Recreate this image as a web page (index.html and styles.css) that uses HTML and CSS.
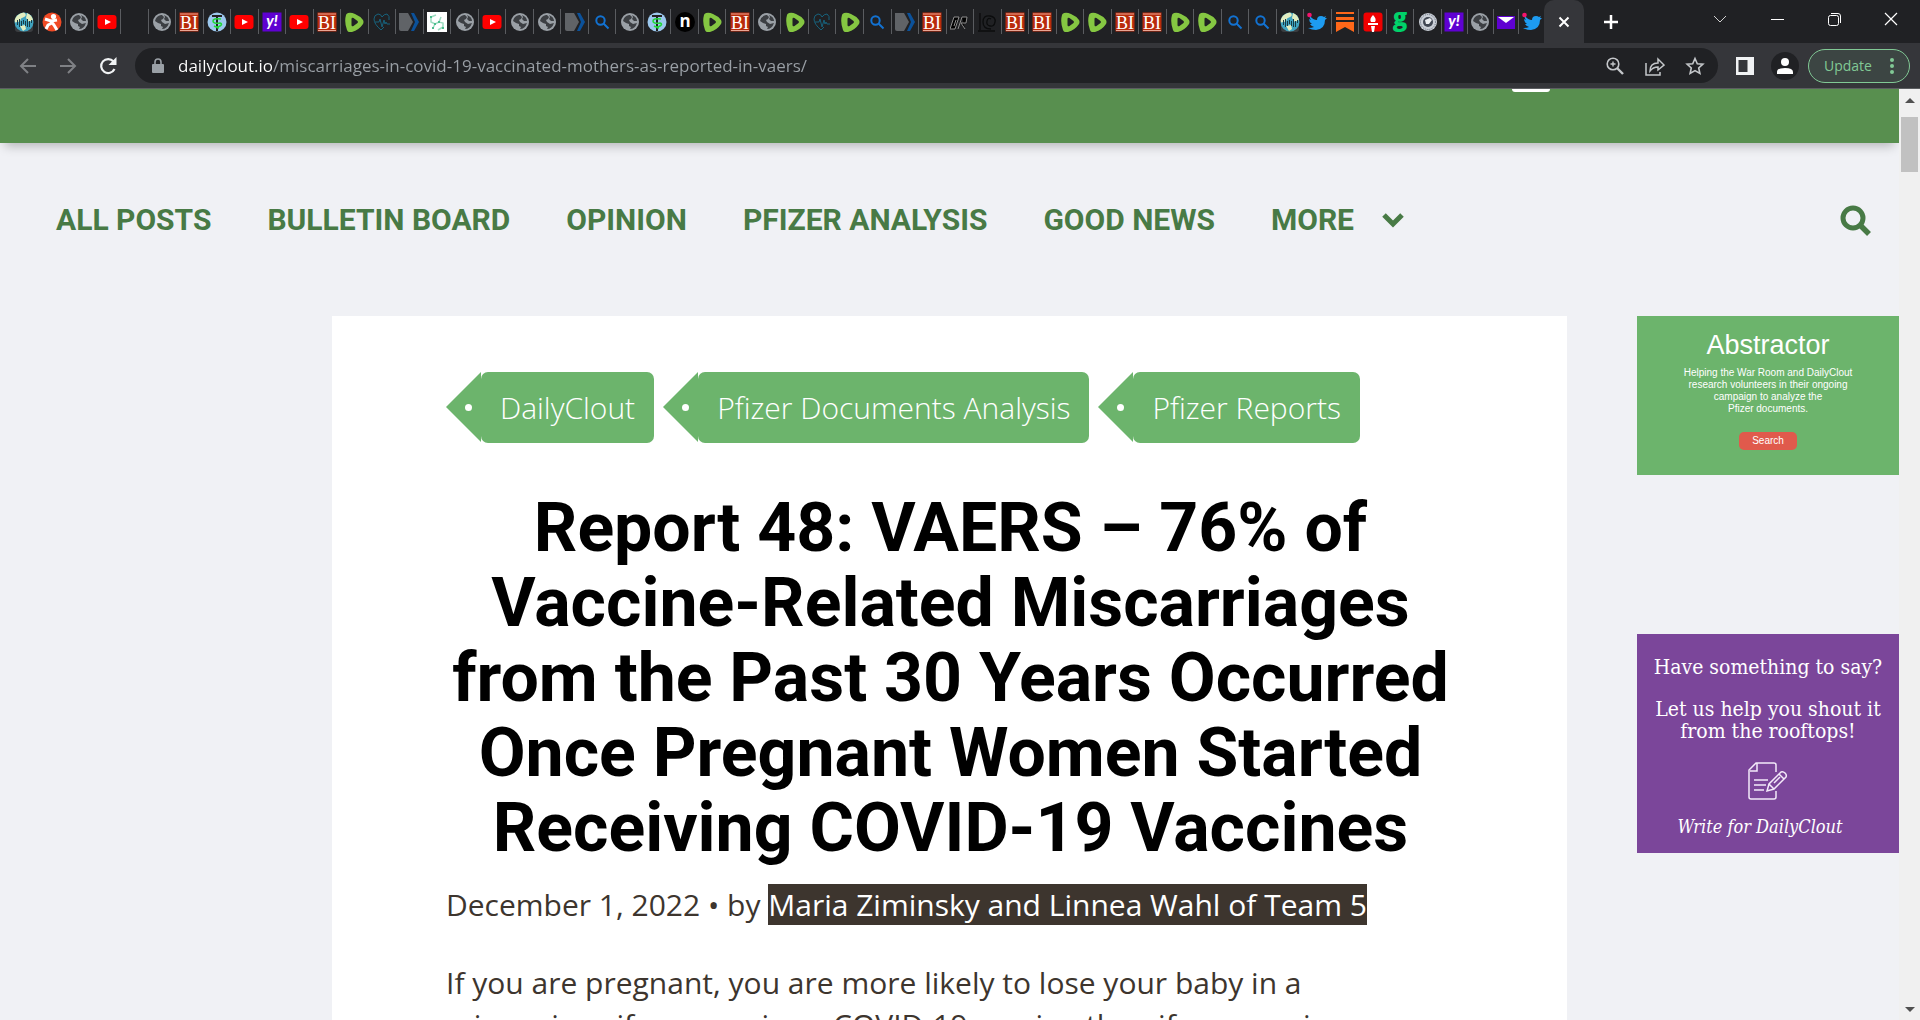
FILE: index.html
```html
<!DOCTYPE html>
<html lang="en">
<head>
    <meta charset="UTF-8">
    <meta name="viewport" content="width=device-width, initial-scale=1.0">
    <title>Report 48: VAERS – DailyClout</title>
    <link rel="stylesheet" href="styles.css">
</head>
<body>

<!-- Favicon shapes shared by the tabs -->
<svg class="sprites" aria-hidden="true">
    <symbol id="earth" viewBox="0 0 20 20"><path d="M1 11h18v6q0 3-3 3H4q-3 0-3-3z" fill="#3a3d40"/><circle cx="10" cy="10" r="9.500" fill="#3fa3c0"/><path d="M2 5q3-4 8-4.500 3 2 1 4l-4 2-1 3-5 1q-1-3 1-5.500zM13 1q5 2 6 7l-4 2-3-4zM6 14l5-1 1 4-3 2z" fill="#e3eec0"/><path d="M3.500 8v5M5.500 7v8M7.500 9v5M9.500 8v4M11.500 9v5M13.500 7v8M15.500 9v6M17.500 8v3" stroke="#173c46" stroke-width="1"/></symbol>
    <symbol id="runner" viewBox="0 0 20 20"><circle cx="10" cy="10" r="9.500" fill="#f04a24"/><circle cx="11.500" cy="4.500" r="2.600" fill="#fff"/><path d="M3 7l6 2 6-1M9 9l3 4 3 5M10 11l-4 2-2 4" stroke="#fff" stroke-width="3" fill="none"/></symbol>
    <symbol id="globe" viewBox="0 0 20 20"><circle cx="10" cy="10" r="9" fill="#9aa0a6"/><path d="M9 3q-5 1-6 6l3 2 3 1v2l2 1 2-3-3-2-1-2 2-1 1-2-2-2zM12 3l1 2-1 2 2 2h3q0-4-5-6zM17 11l-4 1-2 3-1 2q5 0 7-6z" fill="#3c3f43"/></symbol>
    <symbol id="yt" viewBox="0 0 20 20"><rect x="0.500" y="3" width="19" height="14" rx="3" fill="#f00"/><path d="M8 7l6 3-6 3z" fill="#fff"/></symbol>
    <symbol id="bi" viewBox="0 0 20 20"><rect x="0.500" y="0.500" width="19" height="19" fill="#b92b0a"/><path d="M1 2h18M1 18.500h18" stroke="#e9a594"/><text x="10" y="16.500" font-family="Liberation Serif, serif" font-size="18" text-anchor="middle" fill="#fff">BI</text></symbol>
    <symbol id="med" viewBox="0 0 20 20"><circle cx="10" cy="10" r="9.500" fill="#9cc8ee"/><path d="M5 4h10M10 4v15" stroke="#222" stroke-width="2"/><path d="M14 7q-8-1-8 2t7 2q3 1 0 3t-6 0M12 16q-3 0-3-2" stroke="#22d83a" stroke-width="1.600" fill="none"/></symbol>
    <symbol id="yahoo" viewBox="0 0 20 20"><rect x="0.500" y="0.500" width="19" height="19" fill="#5f01d1"/><text x="10" y="14" font-family="Lato, sans-serif" font-size="15" font-weight="900" font-style="italic" text-anchor="middle" fill="#fff">y!</text></symbol>
    <symbol id="rumble" viewBox="0 0 20 20"><path d="M4 1q3-1 7 1 5 2 8 6 1 2 0 4-4 6-11 8-4 1-5-2-3-8-1-15 0-1 2-2z" fill="#85c742"/><path d="M7.500 7q0-2 2-1l4 3q1 1 0 2l-4 3q-2 1-2-1z" fill="#202124"/></symbol>
    <symbol id="heart" viewBox="0 0 20 20"><path d="M9 18Q2 12 2 7q0-4 4-5 3 0 4 3 2-3 5-3 3 2 2 6M12 15l-3 3M3 10h4l1-3 2 8 2-7 1 4 1-2 1 2h3" fill="none" stroke="#17627c" stroke-width="1"/></symbol>
    <symbol id="arrows" viewBox="0 0 20 20"><path d="M0 1h9l5 9-5 9H2q-2 0-2-2z" fill="#606367"/><path d="M12 1h3l5 9-5 9h-3l4-9z" fill="#0b519a"/></symbol>
    <symbol id="molecule" viewBox="0 0 20 20"><path d="M0 0h20v20H0z" fill="#fff"/><path d="M9 3L4 5v5l4 2 4-2 4 1v4l-5 3M8 12l-2 4M12 10l2-5" fill="none" stroke="#9bdcc0" stroke-width="1.500"/><path d="M3 4h2v2H3zM7 11h2v2H7zM11 9h2v2h-2zM15 15h2v2h-2zM5 15h2v2H5z" fill="#4dbd8e"/></symbol>
    <symbol id="lens" viewBox="0 0 20 20"><circle cx="8.500" cy="8.500" r="4.200" fill="none" stroke="#1272d2" stroke-width="2"/><path d="M11.500 11.500l5 5" stroke="#1272d2" stroke-width="2"/></symbol>
    <symbol id="news" viewBox="0 0 20 20"><circle cx="10" cy="10" r="10" fill="#000"/><text x="10" y="15" font-family="Open Sans, sans-serif" font-size="17" font-weight="700" text-anchor="middle" fill="#fff">n</text></symbol>
    <symbol id="dr" viewBox="0 0 20 20"><path d="M4 5L0 17h5l4-12zM12 5L8 17M12 5h5l-1 6h-5l4 6M6 8L4 14" fill="#000" stroke="#8d8d8d" stroke-width="1"/></symbol>
    <symbol id="spiral" viewBox="0 0 20 20"><path d="M3 1v17M1 19h17M14 17q-8 0-8-7t7-6q6 1 5 6t-5 4-3-5 4-2" fill="none" stroke="#0b0c0d" stroke-width="1.300"/></symbol>
    <symbol id="bird" viewBox="0 0 20 20"><path d="M1 16q4 0 6-1-3-1-4-3h2Q2 10 2 7l2 1Q2 6 3 4q3 4 7 4 0-4 4-4 2 0 3 1l2-1-1 2h2l-2 2q0 9-9 10-4 0-8-2z" fill="#1d9bf0"/><circle cx="2.500" cy="3" r="2.300" fill="#f5146c"/></symbol>
    <symbol id="substack" viewBox="0 0 20 20"><path d="M1 0h18v2H1zM1 5h18v3H1zM1 10h18v10l-9-5-9 5z" fill="#ff6719"/></symbol>
    <symbol id="torch" viewBox="0 0 20 20"><rect x="0.500" y="0.500" width="19" height="19" rx="3" fill="#f00000"/><path d="M10 3q4 4 2 7H8q-2-3 2-7zM5 11h10v2H5zM8 14h4l-1 6H9z" fill="#fff"/></symbol>
    <symbol id="gee" viewBox="0 0 20 20"><text x="10" y="14" font-family="Open Sans, sans-serif" font-size="24" font-weight="800" text-anchor="middle" fill="#00d26a">g</text></symbol>
    <symbol id="seal" viewBox="0 0 20 20"><circle cx="10" cy="10" r="9" fill="#c9ced6"/><circle cx="10" cy="10" r="7.500" fill="none" stroke="#66707f" stroke-dasharray="1 1"/><circle cx="10" cy="10" r="5" fill="#3f4652"/><path d="M7 8l5-2 2 2-3 4H8z" fill="#e9ecf0"/></symbol>
    <symbol id="mail" viewBox="0 0 20 20"><rect x="1" y="4" width="18" height="13" fill="#5f01d1"/><path d="M2 5h16l-8 6z" fill="#fff"/></symbol>
</svg>

<!-- Tab strip -->
<div class="tab-strip">
    <div class="tabs">
        <button class="tab" aria-label="Tab 1"><svg><use href="#earth"/></svg></button>
        <button class="tab" aria-label="Tab 2"><svg><use href="#runner"/></svg></button>
        <button class="tab" aria-label="Tab 3"><svg><use href="#globe"/></svg></button>
        <button class="tab" aria-label="Tab 4"><svg><use href="#yt"/></svg></button>
        <button class="tab" aria-label="Tab 5"></button>
        <button class="tab" aria-label="Tab 6"><svg><use href="#globe"/></svg></button>
        <button class="tab" aria-label="Tab 7"><svg><use href="#bi"/></svg></button>
        <button class="tab" aria-label="Tab 8"><svg><use href="#med"/></svg></button>
        <button class="tab" aria-label="Tab 9"><svg><use href="#yt"/></svg></button>
        <button class="tab" aria-label="Tab 10"><svg><use href="#yahoo"/></svg></button>
        <button class="tab" aria-label="Tab 11"><svg><use href="#yt"/></svg></button>
        <button class="tab" aria-label="Tab 12"><svg><use href="#bi"/></svg></button>
        <button class="tab" aria-label="Tab 13"><svg><use href="#rumble"/></svg></button>
        <button class="tab" aria-label="Tab 14"><svg><use href="#heart"/></svg></button>
        <button class="tab" aria-label="Tab 15"><svg><use href="#arrows"/></svg></button>
        <button class="tab" aria-label="Tab 16"><svg><use href="#molecule"/></svg></button>
        <button class="tab" aria-label="Tab 17"><svg><use href="#globe"/></svg></button>
        <button class="tab" aria-label="Tab 18"><svg><use href="#yt"/></svg></button>
        <button class="tab" aria-label="Tab 19"><svg><use href="#globe"/></svg></button>
        <button class="tab" aria-label="Tab 20"><svg><use href="#globe"/></svg></button>
        <button class="tab" aria-label="Tab 21"><svg><use href="#arrows"/></svg></button>
        <button class="tab" aria-label="Tab 22"><svg><use href="#lens"/></svg></button>
        <button class="tab" aria-label="Tab 23"><svg><use href="#globe"/></svg></button>
        <button class="tab" aria-label="Tab 24"><svg><use href="#med"/></svg></button>
        <button class="tab" aria-label="Tab 25"><svg><use href="#news"/></svg></button>
        <button class="tab" aria-label="Tab 26"><svg><use href="#rumble"/></svg></button>
        <button class="tab" aria-label="Tab 27"><svg><use href="#bi"/></svg></button>
        <button class="tab" aria-label="Tab 28"><svg><use href="#globe"/></svg></button>
        <button class="tab" aria-label="Tab 29"><svg><use href="#rumble"/></svg></button>
        <button class="tab" aria-label="Tab 30"><svg><use href="#heart"/></svg></button>
        <button class="tab" aria-label="Tab 31"><svg><use href="#rumble"/></svg></button>
        <button class="tab" aria-label="Tab 32"><svg><use href="#lens"/></svg></button>
        <button class="tab" aria-label="Tab 33"><svg><use href="#arrows"/></svg></button>
        <button class="tab" aria-label="Tab 34"><svg><use href="#bi"/></svg></button>
        <button class="tab" aria-label="Tab 35"><svg><use href="#dr"/></svg></button>
        <button class="tab" aria-label="Tab 36"><svg><use href="#spiral"/></svg></button>
        <button class="tab" aria-label="Tab 37"><svg><use href="#bi"/></svg></button>
        <button class="tab" aria-label="Tab 38"><svg><use href="#bi"/></svg></button>
        <button class="tab" aria-label="Tab 39"><svg><use href="#rumble"/></svg></button>
        <button class="tab" aria-label="Tab 40"><svg><use href="#rumble"/></svg></button>
        <button class="tab" aria-label="Tab 41"><svg><use href="#bi"/></svg></button>
        <button class="tab" aria-label="Tab 42"><svg><use href="#bi"/></svg></button>
        <button class="tab" aria-label="Tab 43"><svg><use href="#rumble"/></svg></button>
        <button class="tab" aria-label="Tab 44"><svg><use href="#rumble"/></svg></button>
        <button class="tab" aria-label="Tab 45"><svg><use href="#lens"/></svg></button>
        <button class="tab" aria-label="Tab 46"><svg><use href="#lens"/></svg></button>
        <button class="tab" aria-label="Tab 47"><svg><use href="#earth"/></svg></button>
        <button class="tab" aria-label="Tab 48"><svg><use href="#bird"/></svg></button>
        <button class="tab" aria-label="Tab 49"><svg><use href="#substack"/></svg></button>
        <button class="tab" aria-label="Tab 50"><svg><use href="#torch"/></svg></button>
        <button class="tab" aria-label="Tab 51"><svg><use href="#gee"/></svg></button>
        <button class="tab" aria-label="Tab 52"><svg><use href="#seal"/></svg></button>
        <button class="tab narrow" aria-label="Tab 53"><svg><use href="#yahoo"/></svg></button>
        <button class="tab narrow" aria-label="Tab 54"><svg><use href="#globe"/></svg></button>
        <button class="tab narrow" aria-label="Tab 55"><svg><use href="#mail"/></svg></button>
        <button class="tab narrow" aria-label="Tab 56"><svg><use href="#bird"/></svg></button>
    </div>
    <button class="tab-active" aria-label="Close tab">
        <svg viewBox="0 0 20 20"><path d="M5.500 5.500l9 9M14.500 5.500l-9 9" stroke="#fff" stroke-width="2"/></svg>
    </button>
    <button class="tab-new" aria-label="New tab">
        <svg viewBox="0 0 20 20"><path d="M10 3v14M3 10h14" stroke="#fff" stroke-width="2.500"/></svg>
    </button>
    <div class="window-buttons">
        <button aria-label="Search tabs"><svg viewBox="0 0 16 16"><path d="M2 5l6 6 6-6" fill="none" stroke="#d0d0d0"/></svg></button>
        <button aria-label="Minimize"><svg viewBox="0 0 16 16"><path d="M2 8.500h13" stroke="#fff"/></svg></button>
        <button aria-label="Restore"><svg viewBox="0 0 16 16"><rect x="2.500" y="4.500" width="10" height="10" rx="2" fill="none" stroke="#fff"/><path d="M5 2.500h7q2.500 0 2.500 2.500v7" fill="none" stroke="#fff"/></svg></button>
        <button aria-label="Close"><svg viewBox="0 0 16 16"><path d="M2 2l12 12M14 2L2 14" stroke="#fff" stroke-width="1.200"/></svg></button>
    </div>
</div>

<!-- Toolbar with the address bar -->
<div class="toolbar">
    <div class="history">
        <button aria-label="Back"><svg viewBox="0 0 20 20"><path d="M18 10H3M10 3l-7 7 7 7" fill="none" stroke="#7f8185" stroke-width="2"/></svg></button>
        <button aria-label="Forward"><svg viewBox="0 0 20 20"><path d="M2 10h15M10 3l7 7-7 7" fill="none" stroke="#7f8185" stroke-width="2"/></svg></button>
        <button aria-label="Reload"><svg viewBox="0 0 20 20"><path d="M16.500 13A7 7 0 1 1 15.500 5.500L17 7" fill="none" stroke="#f1f3f4" stroke-width="2.200"/><path d="M18.500 1v8h-8z" fill="#f1f3f4"/></svg></button>
    </div>
    <div class="address">
        <svg class="lock" viewBox="0 0 12 16"><path d="M1 6h10q1 0 1 1v7q0 1-1 1H1q-1 0-1-1V7q0-1 1-1z" fill="#9aa0a6"/><path d="M3 6V4a3 3 0 0 1 6 0v2" fill="none" stroke="#9aa0a6" stroke-width="1.600"/></svg>
        <input class="url" type="text" aria-label="Address" value="dailyclout.io/miscarriages-in-covid-19-vaccinated-mothers-as-reported-in-vaers/">
        <div class="address-actions">
            <button aria-label="Zoom"><svg viewBox="0 0 20 20"><circle cx="8" cy="8" r="5.800" fill="none" stroke="#c4c7ca" stroke-width="1.600"/><path d="M12 12l6 6" stroke="#c4c7ca" stroke-width="2.400"/><path d="M8 5.500v5M5.500 8h5" stroke="#c4c7ca" stroke-width="1.400"/></svg></button>
            <button aria-label="Share"><svg viewBox="0 0 20 20"><path d="M1 7v12h14v-3" fill="none" stroke="#c4c7ca" stroke-width="1.500"/><path d="M5 15q0-8 8-8V3l6 6-6 5v-3q-5 0-8 4z" fill="none" stroke="#c4c7ca" stroke-width="1.500"/></svg></button>
            <button aria-label="Bookmark"><svg viewBox="0 0 20 20"><path d="M10 2.500l2.300 5.200 5.600.5-4.200 3.800 1.200 5.500-4.900-2.900-4.900 2.900 1.200-5.500-4.200-3.800 5.600-.5z" fill="none" stroke="#c4c7ca" stroke-width="1.600"/></svg></button>
        </div>
    </div>
    <button class="side-panel" aria-label="Side panel"><svg viewBox="0 0 18 18"><path d="M0 0h18v18H0z" fill="#f1f3f4"/><path d="M2.500 3h9v12h-9z" fill="#35363a"/></svg></button>
    <button class="profile" aria-label="Profile"><svg viewBox="0 0 18 18"><circle cx="9" cy="5" r="4" fill="#fff"/><path d="M1 17v-2q0-4 8-4t8 4v2z" fill="#fff"/></svg></button>
    <button class="update"><span>Update</span><svg viewBox="0 0 4 16"><circle cx="2" cy="2" r="2" fill="#81c995"/><circle cx="2" cy="8" r="2" fill="#81c995"/><circle cx="2" cy="14" r="2" fill="#81c995"/></svg></button>
</div>

<!-- Web page -->
<div class="viewport">
    <div class="page">
        <header class="site-header">
            <span class="header-tab"></span>
        </header>

        <nav class="site-nav">
            <a href="#">ALL POSTS</a>
            <a href="#">BULLETIN BOARD</a>
            <a href="#">OPINION</a>
            <a href="#">PFIZER ANALYSIS</a>
            <a href="#">GOOD NEWS</a>
            <a href="#" class="more">MORE <svg viewBox="0 0 24 16"><path d="M3 3l9 9 9-9" fill="none" stroke="#487a45" stroke-width="5"/></svg></a>
            <button class="nav-search" aria-label="Search"><svg viewBox="0 0 32 32"><circle cx="13" cy="14" r="10" fill="none" stroke="#487a45" stroke-width="5"/><path d="M20 21l9 9" stroke="#487a45" stroke-width="5.500"/></svg></button>
        </nav>

        <div class="columns">
            <main class="article">
                <div class="tags">
                    <a href="#" class="tag">DailyClout</a>
                    <a href="#" class="tag">Pfizer Documents Analysis</a>
                    <a href="#" class="tag">Pfizer Reports</a>
                </div>
                <h1>Report 48: VAERS – 76% of Vaccine-Related Miscarriages from the Past 30 Years Occurred Once Pregnant Women Started Receiving COVID-19 Vaccines</h1>
                <p class="meta">December 1, 2022 • by <mark>Maria Ziminsky and Linnea Wahl of Team 5</mark></p>
                <p>If you are pregnant, you are more likely to lose your baby in a<br>miscarriage if you receive a COVID-19 vaccine than if you receive</p>
            </main>

            <aside class="sidebar">
                <section class="abstractor">
                    <h2>Abstractor</h2>
                    <p>Helping the War Room and DailyClout<br>research volunteers in their ongoing<br>campaign to analyze the<br>Pfizer documents.</p>
                    <button>Search</button>
                </section>
                <a href="#" class="write">
                    <span class="ask">Have something to say?</span>
                    <span class="help">Let us help you shout it<br>from the rooftops!</span>
                    <svg viewBox="0 0 40 38"><path d="M28 29v6q0 2-2 2H3q-2 0-2-2V8l7-7h18q2 0 2 2v7M9 1v8H2M6 18h14M6 23h12M6 28h10" fill="none" stroke="#f4eafa" stroke-width="1.500"/><path d="M19 29l2-7L33 10q2-1 4 1t1 4L26 27zM21 22l5 5M31 12l5 5M26 21l6-6" fill="none" stroke="#f4eafa" stroke-width="1.500"/></svg>
                    <em>Write for DailyClout</em>
                </a>
            </aside>
        </div>
    </div>

    <div class="scrollbar">
        <svg viewBox="0 0 10 5"><path d="M5 0l5 5H0z" fill="#505050"/></svg>
        <div class="thumb"></div>
        <svg viewBox="0 0 10 5"><path d="M0 0h10L5 5z" fill="#505050"/></svg>
    </div>
</div>

</body>
</html>
```

FILE: styles.css
```css
* {
    box-sizing: border-box;
}

body {
    margin: 0;
    height: 100vh;
    display: flex;
    flex-direction: column;
    overflow: hidden;
    font-family: "Open Sans", sans-serif;
    background-color: #f0f1f5;
}

button {
    border: none;
    padding: 0;
    background: none;
    cursor: pointer;
}

a {
    text-decoration: none;
}

svg {
    display: block;
    flex: none;
}

.sprites {
    display: none;
}

/* Tab strip */
.tab-strip {
    display: flex;
    flex: none;
    height: 43px;
    padding-left: 11px;
    background-color: #202124;
}

.tabs {
    flex: 1;
    display: flex;
    align-items: center;
}

.tab {
    flex: 16 1 0;
    min-width: 0;
    height: 25px;
    display: flex;
    align-items: center;
    justify-content: center;
    border-right: 1px solid #5a5c60;
}

.tab.narrow {
    flex-grow: 15;
}

.tab:last-child {
    border-right: none;
}

.tab svg {
    width: 20px;
    height: 20px;
}

.tab-active {
    width: 40px;
    display: flex;
    align-items: center;
    justify-content: center;
    border-radius: 10px 10px 0 0;
    background-color: #35363a;
}

.tab-active svg,
.tab-new svg {
    width: 20px;
    height: 20px;
}

.tab-new {
    width: 54px;
    display: flex;
    align-items: center;
    justify-content: center;
}

.window-buttons {
    display: flex;
    margin-left: 53px;
    margin-right: 1px;
}

.window-buttons button {
    width: 57px;
    height: 37px;
    display: flex;
    align-items: center;
    justify-content: center;
}

.window-buttons svg {
    width: 16px;
    height: 16px;
}

/* Toolbar */
.toolbar {
    display: flex;
    flex: none;
    align-items: center;
    height: 46px;
    padding: 0 10px 0 18px;
    background-color: #35363a;
    border-bottom: 1px solid #5c5e61;
}

.history {
    display: flex;
    gap: 20px;
    margin-right: 17px;
}

.history svg {
    width: 20px;
    height: 20px;
}

.address {
    flex: 1;
    display: flex;
    align-items: center;
    gap: 14px;
    height: 35px;
    padding: 0 13px 0 17px;
    border-radius: 18px;
    background-color: #202124;
}

.address-actions {
    display: flex;
    gap: 20px;
}

.address svg {
    width: 20px;
    height: 20px;
}

.address .lock {
    width: 12px;
    height: 16px;
}

/* Host is white, the path is grey */
.url {
    flex: 1;
    min-width: 0;
    padding: 0;
    border: none;
    outline: none;
    font-family: "Open Sans", sans-serif;
    font-size: 17px;
    color: transparent;
    background: linear-gradient(to right, #fff 95px, #9aa0a6 95px);
    background-clip: text;
    -webkit-background-clip: text;
}

.side-panel {
    margin-left: 18px;
}

.side-panel svg {
    width: 18px;
    height: 18px;
}

.profile {
    width: 28px;
    height: 28px;
    margin-left: 17px;
    display: flex;
    align-items: center;
    justify-content: center;
    border-radius: 50%;
    background-color: #202124;
}

.profile svg {
    width: 18px;
    height: 18px;
}

.update {
    width: 102px;
    height: 34px;
    margin-left: 9px;
    display: flex;
    align-items: center;
    justify-content: space-between;
    padding: 0 15px;
    border: 1px solid #81c995;
    border-radius: 17px;
    background-color: #3c4543;
    color: #81c995;
    font-family: "Open Sans", sans-serif;
    font-size: 14px;
}

.update svg {
    width: 4px;
    height: 16px;
}

/* Page area */
.viewport {
    flex: 1;
    min-height: 0;
    display: flex;
}

.page {
    flex: 1;
    min-width: 0;
    overflow: hidden;
}

.site-header {
    display: flex;
    height: 54px;
    background-color: #588f4f;
    box-shadow: 0 8px 10px -5px rgba(0, 0, 0, 0.25);
}

.header-tab {
    width: 38px;
    height: 3px;
    margin-left: auto;
    margin-right: 349px;
    border-radius: 0 0 6px 6px;
    background-color: #fff;
}

.site-nav {
    display: flex;
    align-items: center;
    gap: 56px;
    height: 173px;
    padding: 0 27px 20px 56px;
}

.site-nav a {
    font-family: Roboto, sans-serif;
    font-size: 30px;
    font-weight: 700;
    color: #487a45;
}

.more {
    display: flex;
    align-items: center;
    gap: 27px;
}

.more svg {
    width: 24px;
    height: 16px;
}

.nav-search {
    margin-left: auto;
}

.nav-search svg {
    width: 32px;
    height: 32px;
}

.columns {
    display: flex;
    justify-content: space-between;
    align-items: flex-start;
    padding-left: 332px;
}

/* Article */
.article {
    width: 1235px;
    max-width: 79%;
    padding: 56px 112px 80px 114px;
    background-color: #fff;
}

.tags {
    display: flex;
    gap: 9px;
}

.tag {
    position: relative;
    height: 71px;
    margin-left: 35px;
    padding: 0 19px;
    border-radius: 7px;
    background-color: #6cb46c;
    color: #fff;
    font-size: 30px;
    font-weight: 300;
    line-height: 71px;
    white-space: nowrap;
}

/* Arrow end of the tag */
.tag::before {
    content: "";
    position: absolute;
    top: 0;
    left: -35px;
    border: 35px solid transparent;
    border-left: none;
    border-right-color: #6cb46c;
}

.tag::after {
    content: "";
    position: absolute;
    top: 32px;
    left: -16px;
    width: 7px;
    height: 7px;
    border-radius: 50%;
    background-color: #fff;
}

h1 {
    margin: 48px 0 18px;
    font-family: Roboto, sans-serif;
    font-size: 68px;
    font-weight: 700;
    line-height: 75px;
    text-align: center;
    color: #000;
}

.article p {
    margin: 0;
    font-size: 30px;
    line-height: 42px;
    color: #3d352e;
    white-space: nowrap;
}

.article .meta {
    margin-bottom: 36px;
}

mark {
    background-color: #3d352e;
    color: #fff;
}

/* Sidebar */
.sidebar {
    width: 262px;
    display: flex;
    flex-direction: column;
    gap: 159px;
}

.abstractor {
    height: 159px;
    padding-top: 14px;
    text-align: center;
    color: #fff;
    background-color: #6cb46c;
    font-family: "Liberation Sans", sans-serif;
}

.abstractor h2 {
    margin: 0;
    font-size: 27px;
    font-weight: 400;
    line-height: 30px;
}

.abstractor p {
    margin: 7px 0 15px;
    font-size: 10px;
    line-height: 12px;
}

.abstractor button {
    width: 58px;
    height: 18px;
    border-radius: 5px;
    background-color: #e05a4c;
    color: #fff;
    font-family: "Liberation Sans", sans-serif;
    font-size: 10px;
}

.write {
    height: 219px;
    padding-top: 22px;
    display: flex;
    flex-direction: column;
    align-items: center;
    text-align: center;
    color: #fff;
    background-color: #7b469a;
    font-family: "DejaVu Serif Condensed", "DejaVu Serif", serif;
    font-size: 21px;
    line-height: 22px;
    white-space: nowrap;
}

.help {
    margin: 20px 0;
}

.write svg {
    width: 40px;
    height: 38px;
}

.write em {
    margin-top: 16px;
    margin-right: 16px;
    font-size: 18px;
}

/* Scrollbar */
.scrollbar {
    width: 21px;
    display: flex;
    flex-direction: column;
    align-items: center;
    padding: 9px 0 8px;
    background-color: #f0f0f0;
}

.scrollbar svg {
    width: 10px;
    height: 5px;
}

.thumb {
    width: 17px;
    height: 55px;
    margin: 14px 0 auto;
    background-color: #c1c1c1;
}
```
